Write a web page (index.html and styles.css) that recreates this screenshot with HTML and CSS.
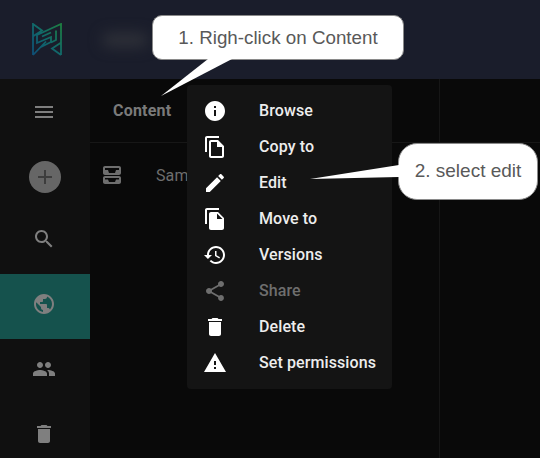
FILE: index.html
```html
<!DOCTYPE html>
<html lang="en">
<head>
    <title>Content</title>
    <link rel="stylesheet" href="styles.css">
</head>
<body>
    <header class="topbar">
        <svg class="logo" width="30" height="33" viewBox="0 0 30 33" fill="none">
            <defs>
                <linearGradient id="logoGrad" x1="0" y1="1" x2="1" y2="0">
                    <stop offset="0" stop-color="#0e4f78"/>
                    <stop offset="0.5" stop-color="#11696a"/>
                    <stop offset="1" stop-color="#1d8040"/>
                </linearGradient>
            </defs>
            <path d="M1 32V1l9 6.500L1.500 13M1 32l13-13.500M29 32V1L5 12v8l14-6v5L9 24M24 7.500V17l-5 2.500M10 13.500l9-4M29 32l-9-6.500 8.500-5.500" stroke="url(#logoGrad)" stroke-width="1.800"/>
        </svg>
        <div class="smudge"></div>
    </header>

    <div class="workspace">
        <nav class="sidebar">
            <div class="nav-item">
                <svg class="icon" viewBox="0 0 24 24"><path d="M3 18h18v-2H3v2zm0-5h18v-2H3v2zm0-7v2h18V6H3z"/></svg>
            </div>
            <div class="nav-add">
                <div class="add-button">
                    <svg class="icon" viewBox="0 0 24 24"><path d="M19 13h-6v6h-2v-6H5v-2h6V5h2v6h6v2z"/></svg>
                </div>
            </div>
            <div class="nav-item nav-link">
                <svg class="icon" viewBox="0 0 24 24"><path d="M15.5 14h-.79l-.28-.27C15.41 12.59 16 11.11 16 9.5 16 5.91 13.09 3 9.5 3S3 5.91 3 9.5 5.91 16 9.5 16c1.61 0 3.09-.59 4.23-1.57l.27.28v.79l5 4.99L20.49 19l-4.99-5zm-6 0C7.01 14 5 11.99 5 9.5S7.01 5 9.5 5 14 7.01 14 9.5 11.99 14 9.5 14z"/></svg>
            </div>
            <div class="nav-item nav-link active">
                <svg class="icon" viewBox="0 0 24 24"><path d="M12 2C6.48 2 2 6.48 2 12s4.48 10 10 10 10-4.48 10-10S17.52 2 12 2zm-1 17.93c-3.95-.49-7-3.85-7-7.93 0-.62.08-1.21.21-1.79L9 15v1c0 1.1.9 2 2 2v1.93zm6.9-2.54c-.26-.81-1-1.39-1.9-1.39h-1v-3c0-.55-.45-1-1-1H8v-2h2c.55 0 1-.45 1-1V7h2c1.1 0 2-.9 2-2v-.41c2.93 1.19 5 4.06 5 7.41 0 2.08-.8 3.97-2.1 5.39z"/></svg>
            </div>
            <div class="nav-item nav-link">
                <svg class="icon" viewBox="0 0 24 24"><path d="M16 11c1.66 0 2.99-1.34 2.99-3S17.66 5 16 5c-1.66 0-3 1.34-3 3s1.34 3 3 3zm-8 0c1.66 0 2.99-1.34 2.99-3S9.66 5 8 5C6.34 5 5 6.34 5 8s1.34 3 3 3zm0 2c-2.33 0-7 1.17-7 3.5V19h14v-2.5c0-2.33-4.67-3.5-7-3.5zm8 0c-.29 0-.62.02-.97.05 1.16.84 1.97 1.97 1.97 3.45V19h6v-2.5c0-2.33-4.67-3.5-7-3.5z"/></svg>
            </div>
            <div class="nav-item nav-link">
                <svg class="icon" viewBox="0 0 24 24"><path d="M6 19c0 1.1.9 2 2 2h8c1.1 0 2-.9 2-2V7H6v12zM19 4h-3.5l-1-1h-5l-1 1H5v2h14V4z"/></svg>
            </div>
        </nav>

        <section class="tree">
            <div class="panel-head">Content</div>
            <div class="tree-row">
                <svg class="icon" viewBox="0 0 24 24" fill-rule="evenodd"><path d="M5 3h14c1.100 0 2 .9 2 2v5c0 1.100-.9 2-2 2H5c-1.100 0-2-.9-2-2V5c0-1.100.9-2 2-2zm0 2v2h3l1 3h6l1-3h3V5zM5 13h14c1.100 0 2 .9 2 2v4c0 1.100-.9 2-2 2H5c-1.100 0-2-.9-2-2v-4c0-1.100.9-2 2-2zm0 2v1.500h3l1 2.500h6l1-2.500h3V15z"/></svg>
                <span class="tree-label">Sample Site</span>
            </div>
        </section>

        <section class="details">
            <div class="panel-head"></div>
        </section>
    </div>

    <ul class="context-menu">
        <li>
            <svg class="icon" viewBox="0 0 24 24"><path d="M12 2C6.48 2 2 6.48 2 12s4.48 10 10 10 10-4.48 10-10S17.52 2 12 2zm1 15h-2v-6h2v6zm0-8h-2V7h2v2z"/></svg>
            <span class="menu-label">Browse</span>
        </li>
        <li>
            <svg class="icon" viewBox="0 0 24 24"><path d="M16 1H4c-1.1 0-2 .9-2 2v14h2V3h12V1zm-1 4H8c-1.1 0-1.99.9-1.99 2L6 21c0 1.1.89 2 1.99 2H19c1.1 0 2-.9 2-2V11l-6-6zM8 21V7h6v5h5v9H8z"/></svg>
            <span class="menu-label">Copy to</span>
        </li>
        <li>
            <svg class="icon" viewBox="0 0 24 24"><path d="M3 17.25V21h3.75L17.81 9.94l-3.75-3.75L3 17.25zM20.71 7.04c.39-.39.39-1.02 0-1.41l-2.34-2.34c-.39-.39-1.02-.39-1.41 0l-1.83 1.83 3.75 3.75 1.83-1.83z"/></svg>
            <span class="menu-label">Edit</span>
        </li>
        <li>
            <svg class="icon" viewBox="0 0 24 24"><path d="M16 1H4c-1.1 0-2 .9-2 2v14h2V3h12V1zm-1 4l6 6v10c0 1.1-.9 2-2 2H7.99C6.89 23 6 22.1 6 21l.01-14c0-1.1.89-2 1.99-2h7zm-1 7h5.5L14 6.500V12z"/></svg>
            <span class="menu-label">Move to</span>
        </li>
        <li>
            <svg class="icon" viewBox="0 0 24 24"><path d="M13 3c-4.97 0-9 4.03-9 9H1l3.89 3.89.07.14L9 12H6c0-3.87 3.13-7 7-7s7 3.13 7 7-3.13 7-7 7c-1.93 0-3.68-.79-4.94-2.06l-1.42 1.42C8.27 19.99 10.51 21 13 21c4.97 0 9-4.03 9-9s-4.03-9-9-9zm-1 5v5l4.28 2.54.72-1.21-3.5-2.08V8H12z"/></svg>
            <span class="menu-label">Versions</span>
        </li>
        <li class="disabled">
            <svg class="icon" viewBox="0 0 24 24"><path d="M18 16.08c-.76 0-1.44.3-1.96.77L8.91 12.7c.05-.23.09-.46.09-.7s-.04-.47-.09-.7l7.05-4.11c.54.5 1.25.81 2.04.81 1.66 0 3-1.34 3-3s-1.34-3-3-3-3 1.34-3 3c0 .24.04.47.09.7L8.04 9.81C7.5 9.31 6.79 9 6 9c-1.66 0-3 1.34-3 3s1.34 3 3 3c.79 0 1.5-.31 2.04-.81l7.12 4.16c-.05.21-.08.43-.08.65 0 1.61 1.31 2.92 2.92 2.92 1.61 0 2.92-1.31 2.92-2.92s-1.31-2.92-2.92-2.92z"/></svg>
            <span class="menu-label">Share</span>
        </li>
        <li>
            <svg class="icon" viewBox="0 0 24 24"><path d="M6 19c0 1.1.9 2 2 2h8c1.1 0 2-.9 2-2V7H6v12zM19 4h-3.5l-1-1h-5l-1 1H5v2h14V4z"/></svg>
            <span class="menu-label">Delete</span>
        </li>
        <li>
            <svg class="icon" viewBox="0 0 24 24"><path d="M1 21h22L12 2 1 21zm12-3h-2v-2h2v2zm0-4h-2v-4h2v4z"/></svg>
            <span class="menu-label">Set permissions</span>
        </li>
    </ul>

    <div class="callout callout-one">
        <svg class="tail tail-one" width="76" height="40" viewBox="0 0 76 40"><path d="M47 0 L71 0 L0 37 Z"/></svg>
        1. Righ-click on Content
    </div>
    <div class="callout callout-two">
        <svg class="tail tail-two" width="92" height="16" viewBox="0 0 92 16"><path d="M90 0 L90 12 L1 14 Z"/></svg>
        2. select edit
    </div>
</body>
</html>
```

FILE: styles.css
```css
* {
    box-sizing: border-box;
}

body {
    margin: 0;
    height: 458px;
    overflow: hidden;
    display: flex;
    flex-direction: column;
    background-color: #090909;
    font-family: Roboto, "Liberation Sans", sans-serif;
    letter-spacing: 0.1px;
    color: #7f7f7f;
}

.icon {
    width: 24px;
    height: 24px;
    fill: currentColor;
    flex-shrink: 0;
}

.topbar {
    height: 79px;
    flex-shrink: 0;
    display: flex;
    align-items: center;
    padding-left: 32px;
    background-color: #1a1d2b;
}

.smudge {
    width: 46px;
    height: 14px;
    margin-left: 40px;
    background-color: #2f3139;
    border-radius: 7px;
    filter: blur(7px);
}

.workspace {
    flex: 1;
    display: flex;
    min-height: 0;
}

.sidebar {
    width: 90px;
    flex-shrink: 0;
    background-color: #101010;
}

.nav-item {
    height: 65px;
    display: flex;
    align-items: center;
    justify-content: center;
    padding-right: 2px;
    color: #7f7f7f;
}

.nav-link {
    padding-bottom: 5px;
}

.nav-add {
    height: 65px;
    display: flex;
    align-items: center;
    justify-content: center;
}

.nav-item.active {
    background-color: #15524d;
}

.add-button {
    width: 32px;
    height: 32px;
    border-radius: 50%;
    display: flex;
    align-items: center;
    justify-content: center;
    background-color: #666;
    color: #3d3d3d;
}

.tree {
    width: 350px;
    flex-shrink: 0;
    border-right: 1px solid #161616;
}

.details {
    flex: 1;
}

.panel-head {
    height: 64px;
    padding-top: 22px;
    padding-left: 23px;
    font-size: 16px;
    font-weight: 700;
    letter-spacing: 0.2px;
    color: #7a7a7a;
    border-bottom: 1px solid #171717;
}

.tree-row {
    display: flex;
    align-items: center;
    height: 64px;
    padding-left: 10px;
    font-size: 16px;
    color: #6e6e6e;
}

.tree-label {
    margin-left: 32px;
    padding-top: 1px;
}

.context-menu {
    position: absolute;
    left: 187px;
    top: 85px;
    width: 205px;
    margin: 0;
    padding: 8px 0;
    list-style: none;
    background-color: #141414;
    border-radius: 4px;
    font-size: 16px;
    font-weight: 500;
    color: #ededed;
}

.context-menu li {
    height: 36px;
    display: flex;
    align-items: center;
    gap: 32px;
    padding-left: 16px;
}

.menu-label {
    padding-bottom: 2px;
}

.context-menu .icon {
    color: #fff;
}

.context-menu li.disabled,
.context-menu li.disabled .icon {
    color: #6e6e6e;
}

.callout {
    position: absolute;
    display: flex;
    align-items: center;
    justify-content: center;
    background-color: #fff;
    border: 1px solid #8a8a8a;
    font-family: "Liberation Sans", Arial, sans-serif;
    font-size: 19px;
    letter-spacing: 0;
    color: #595959;
}

.callout-one {
    left: 152px;
    top: 15px;
    width: 252px;
    height: 45px;
    font-size: 18.8px;
    border-radius: 10px;
}

.callout-two {
    left: 398px;
    top: 143px;
    width: 140px;
    height: 57px;
    padding-bottom: 2px;
    border-radius: 19px;
}

.tail {
    position: absolute;
    fill: #fff;
}

.tail-one {
    left: 8px;
    top: 43px;
}

.tail-two {
    left: -90px;
    top: 21px;
}
```
